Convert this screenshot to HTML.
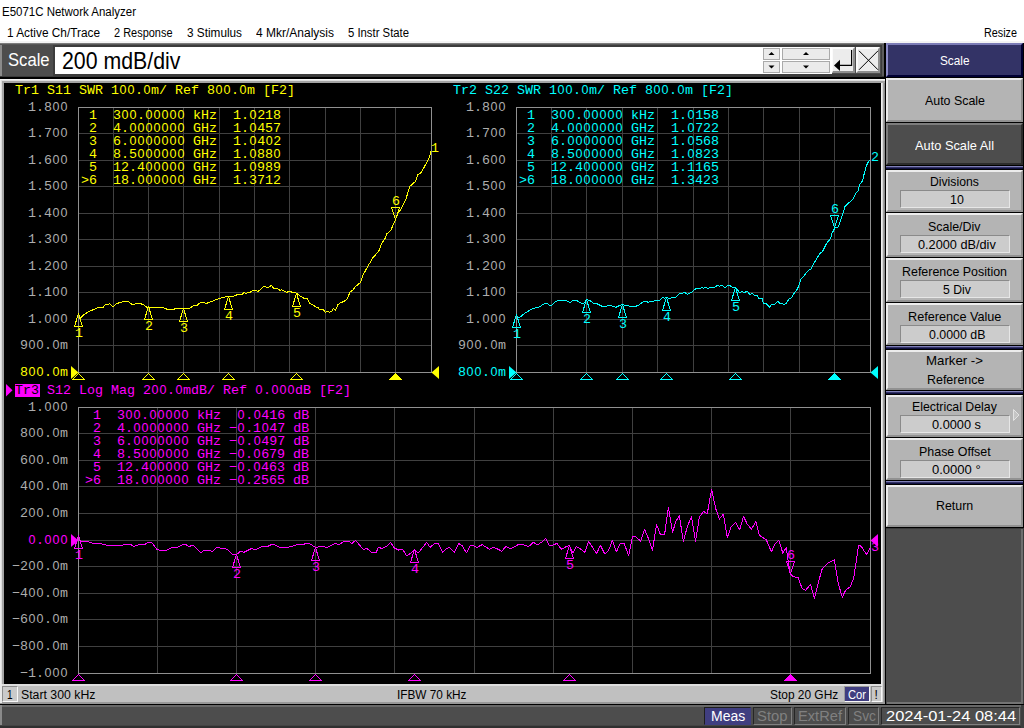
<!DOCTYPE html>
<html><head><meta charset="utf-8"><title>E5071C Network Analyzer</title>
<style>
html,body{margin:0;padding:0;}
body{width:1024px;height:728px;position:relative;overflow:hidden;background:#fff;font-family:"Liberation Sans",sans-serif;}
.a{position:absolute;}
.t{position:absolute;white-space:pre;line-height:1;}
.m{font-family:"Liberation Mono",monospace;font-size:13.33px;white-space:pre;position:absolute;line-height:13px;letter-spacing:0;}
.m i{font-family:"Liberation Sans",sans-serif;font-style:normal;font-size:12.5px;letter-spacing:1.05px;line-height:0;position:relative;left:0.5px;}
.btn{position:absolute;left:886px;width:137px;background:#b4b4b4;box-sizing:border-box;border-style:solid;border-width:2px;border-color:#ececec #919191 #919191 #ececec;}
.fld{position:absolute;width:110px;height:18px;background:#cccccc;box-sizing:border-box;border-style:solid;border-width:1px;border-color:#8a8a8a #e6e6e6 #e6e6e6 #8a8a8a;}
.sep{position:absolute;left:886px;width:137px;height:3px;background:#333366;border-top:1px solid #8080b8;border-bottom:1px solid #101040;box-sizing:border-box;}
.sb{position:absolute;top:707px;height:18px;box-sizing:border-box;}
</style></head><body>

<div class="t" style="left:2px;top:5.84px;font-size:12px;color:#000;transform-origin:0 0;transform:scaleX(0.9566);">E5071C Network Analyzer</div>
<div class="t" style="left:7px;top:26.84px;font-size:12px;color:#000;transform-origin:0 0;transform:scaleX(0.9866);">1 Active Ch/Trace</div>
<div class="t" style="left:114px;top:26.84px;font-size:12px;color:#000;transform-origin:0 0;transform:scaleX(0.9134);">2 Response</div>
<div class="t" style="left:187px;top:26.84px;font-size:12px;color:#000;transform-origin:0 0;transform:scaleX(0.9817);">3 Stimulus</div>
<div class="t" style="left:256px;top:26.84px;font-size:12px;color:#000;transform-origin:0 0;transform:scaleX(0.9997);">4 Mkr/Analysis</div>
<div class="t" style="left:348px;top:26.84px;font-size:12px;color:#000;transform-origin:0 0;transform:scaleX(0.9428);">5 Instr State</div>
<div class="t" style="left:984px;top:26.84px;font-size:12px;color:#000;transform-origin:0 0;transform:scaleX(0.8997);">Resize</div>
<div class="a" style="left:0;top:41px;width:1024px;height:2px;background:#f4f4f4;"></div>
<div class="a" style="left:0;top:43px;width:1024px;height:685px;background:#4d4d4d;"></div>
<div class="a" style="left:0;top:43px;width:886px;height:1px;background:#7c7c7c;"></div>
<div class="a" style="left:0;top:44px;width:886px;height:1px;background:#585858;"></div>
<div class="a" style="left:0;top:45px;width:2px;height:32px;background:#8a8a8a;"></div>
<div class="a" style="left:0;top:76px;width:886px;height:1px;background:#3a3a3a;"></div>
<div class="a" style="left:0;top:77px;width:886px;height:2px;background:#000;"></div>
<div class="a" style="left:884px;top:43px;width:2px;height:36px;background:#000;"></div>
<div class="a" style="left:881px;top:45px;width:3px;height:31px;background:#5c5c5c;"></div>
<div class="a" style="left:53px;top:45px;width:829px;height:31px;background:#3c3c3c;"></div>
<div class="a" style="left:55px;top:47px;width:825px;height:27px;background:#fff;"></div>
<div class="t" style="left:7.6px;top:52.19px;font-size:17.5px;color:#fff;transform-origin:0 0;transform:scaleX(0.9503);">Scale</div>
<div class="t" style="left:61.8px;top:49.59px;font-size:23.4px;color:#000;transform-origin:0 0;transform:scaleX(0.9110);">200 mdB/div</div>
<div class="a" style="left:763px;top:48px;width:17px;height:12px;background:#ebebeb;box-sizing:border-box;border:1px solid #aaaaaa;"></div>
<div class="a" style="left:763px;top:61px;width:17px;height:12px;background:#ebebeb;box-sizing:border-box;border:1px solid #aaaaaa;"></div>
<div class="a" style="left:782px;top:48px;width:48px;height:12px;background:#ebebeb;box-sizing:border-box;border:1px solid #aaaaaa;"></div>
<div class="a" style="left:782px;top:61px;width:48px;height:12px;background:#ebebeb;box-sizing:border-box;border:1px solid #aaaaaa;"></div>
<div class="a" style="left:832px;top:47px;width:49px;height:27px;background:#4d4d4d;"></div>
<div class="a" style="left:832px;top:47px;width:23px;height:26px;background:#ececec;box-sizing:border-box;border-style:solid;border-width:2px 2px 2px 1px;border-color:#fbfbfb #8e8e8e #8e8e8e #fbfbfb;"></div>
<div class="a" style="left:856px;top:47px;width:24px;height:26px;background:#ececec;box-sizing:border-box;border-style:solid;border-width:2px;border-color:#fbfbfb #8e8e8e #8e8e8e #fbfbfb;"></div>
<svg class="a" style="left:0;top:0;" width="1024" height="100" viewBox="0 0 1024 100">
<polygon points="768.5,55 774.5,55 771.5,52" fill="#000"/>
<polygon points="768.5,65.5 774.5,65.5 771.5,68.5" fill="#000"/>
<polygon points="803,55 809,55 806,52" fill="#000"/>
<polygon points="803,65.5 809,65.5 806,68.5" fill="#000"/>
<path d="M851.6 50 V65.4 H839" fill="none" stroke="#000" stroke-width="1.2"/>
<polygon points="834,65.4 840,59.8 840,71" fill="#000"/>
<path d="M859 50.8 L878 69.8 M878 50.8 L859 69.8" fill="none" stroke="#000" stroke-width="1"/>
</svg>
<div class="a" style="left:0;top:79px;width:885px;height:623px;background:#a4a4a4;"></div>
<div class="a" style="left:0;top:79px;width:885px;height:1px;background:#f4f4f4;"></div>
<div class="a" style="left:0;top:80px;width:885px;height:1px;background:#dedede;"></div>
<div class="a" style="left:0;top:80px;width:1px;height:622px;background:#ececec;"></div>
<div class="a" style="left:1px;top:81px;width:1px;height:621px;background:#dcdcdc;"></div>
<div class="a" style="left:4px;top:83px;width:877px;height:601px;background:#000;"></div>
<div class="a" style="left:881px;top:83px;width:1px;height:619px;background:#f0f0f0;"></div>
<div class="a" style="left:882px;top:83px;width:1px;height:619px;background:#d8d8d8;"></div>
<div class="a" style="left:883px;top:83px;width:1px;height:619px;background:#a0a0a0;"></div>
<div class="a" style="left:884px;top:83px;width:1px;height:619px;background:#8c8c8c;"></div>
<div class="a" style="left:0;top:684px;width:881px;height:18px;background:#c0c0c0;"></div>
<div class="a" style="left:0;top:684px;width:881px;height:2px;background:#dedede;"></div>
<div class="a" style="left:0;top:702px;width:885px;height:2px;background:#989898;"></div>
<div class="a" style="left:887px;top:702px;width:136px;height:2px;background:#747474;"></div>
<div class="a" style="left:0;top:704px;width:1024px;height:1px;background:#000;"></div>
<div class="a" style="left:2px;top:686px;width:16px;height:16px;background:#cacaca;box-sizing:border-box;border:1px solid #f8f8f8;border-top-color:#8c8c8c;border-left-color:#8c8c8c;"></div>
<div class="a" style="left:0;top:684px;width:2px;height:19px;background:#e8e8e8;"></div>
<div class="t" style="left:6.6px;top:689.14px;font-size:12px;color:#000;transform-origin:0 0;transform:scaleX(0.8391);">1</div>
<div class="t" style="left:21.4px;top:689.14px;font-size:12px;color:#000;transform-origin:0 0;transform:scaleX(1.0234);">Start 300 kHz</div>
<div class="t" style="left:397.3px;top:689.14px;font-size:12px;color:#000;transform-origin:0 0;transform:scaleX(0.9834);">IFBW 70 kHz</div>
<div class="t" style="left:769.6px;top:689.14px;font-size:12px;color:#000;transform-origin:0 0;transform:scaleX(0.9927);">Stop 20 GHz</div>
<div class="a" style="left:844px;top:686px;width:26px;height:16px;background:#403e80;box-sizing:border-box;border:1px solid #f8f8f8;border-top-color:#9a9a9a;border-left-color:#9a9a9a;"></div>
<div class="t" style="left:848.3px;top:689.14px;font-size:12px;color:#fff;transform-origin:0 0;transform:scaleX(0.9309);">Cor</div>
<div class="a" style="left:871px;top:686px;width:11px;height:16px;background:#c8c8c8;box-sizing:border-box;border:1px solid #f8f8f8;border-top-color:#8c8c8c;border-left-color:#8c8c8c;"></div>
<div class="t" style="left:874.6px;top:689.14px;font-size:12px;color:#000;transform-origin:0 0;transform:scaleX(1.0000);">!</div>
<div class="a" style="left:885px;top:43px;width:139px;height:485px;background:#000;"></div>
<div class="a" style="left:1021px;top:528px;width:2px;height:176px;background:#6e6e6e;"></div>
<div class="a" style="left:1023px;top:528px;width:1px;height:176px;background:#3a3a3a;"></div>
<div class="a" style="left:886px;top:528px;width:137px;height:1px;background:#3a3a3a;"></div>
<div class="a" style="left:885px;top:528px;width:1px;height:176px;background:#000;"></div>
<div class="a" style="left:886px;top:43px;width:137px;height:34px;background:#333366;box-sizing:border-box;border-top:2px solid #7c7cb6;border-left:2px solid #8c8cc8;border-bottom:2px solid #000033;border-right:2px solid #000033;"></div>
<div class="t" style="left:939.95px;top:54.3px;font-size:13px;color:#fff;transform-origin:0 0;transform:scaleX(0.9071);">Scale</div>
<div class="btn" style="top:78px;height:44px;"></div>
<div class="t" style="left:924.7px;top:94px;font-size:13px;color:#000;transform-origin:0 0;transform:scaleX(0.9543);">Auto Scale</div>
<div class="btn" style="top:123px;height:42px;background:#4d4d4d;border-color:#7c7c7c #2c2c2c #2c2c2c #7c7c7c;"></div>
<div class="t" style="left:915.2px;top:139px;font-size:13px;color:#fff;transform-origin:0 0;transform:scaleX(0.9848);">Auto Scale All</div>
<div class="sep" style="top:166px;"></div>
<div class="btn" style="top:170px;height:42px;"></div>
<div class="t" style="left:930.3px;top:174.5px;font-size:13px;color:#000;transform-origin:0 0;transform:scaleX(0.9382);">Divisions</div>
<div class="fld" style="left:900px;top:190px;"></div>
<div class="t" style="left:949.8px;top:192.6px;font-size:13px;color:#000;transform-origin:0 0;transform:scaleX(0.9543);">10</div>
<div class="btn" style="top:213px;height:44px;"></div>
<div class="t" style="left:928.45px;top:219.5px;font-size:13px;color:#000;transform-origin:0 0;transform:scaleX(0.9561);">Scale/Div</div>
<div class="fld" style="left:900px;top:235px;"></div>
<div class="t" style="left:917.8px;top:237.6px;font-size:13px;color:#000;transform-origin:0 0;transform:scaleX(0.9785);">0.2000 dB/div</div>
<div class="btn" style="top:258px;height:44px;"></div>
<div class="t" style="left:902.2px;top:264.5px;font-size:13px;color:#000;transform-origin:0 0;transform:scaleX(0.9559);">Reference Position</div>
<div class="fld" style="left:900px;top:280px;"></div>
<div class="t" style="left:942.8px;top:282.6px;font-size:13px;color:#000;transform-origin:0 0;transform:scaleX(0.9386);">5 Div</div>
<div class="btn" style="top:303px;height:42px;"></div>
<div class="t" style="left:908px;top:309.5px;font-size:13px;color:#000;transform-origin:0 0;transform:scaleX(0.9742);">Reference Value</div>
<div class="fld" style="left:900px;top:325px;"></div>
<div class="t" style="left:928.5px;top:327.6px;font-size:13px;color:#000;transform-origin:0 0;transform:scaleX(0.9515);">0.0000 dB</div>
<div class="sep" style="top:346px;"></div>
<div class="btn" style="top:350px;height:40px;"></div>
<div class="t" style="left:926.2px;top:354.3px;font-size:13px;color:#000;transform-origin:0 0;transform:scaleX(1.0182);">Marker -&gt;</div>
<div class="t" style="left:926.5px;top:372.6px;font-size:13px;color:#000;transform-origin:0 0;transform:scaleX(0.9570);">Reference</div>
<div class="sep" style="top:391px;"></div>
<div class="btn" style="top:395px;height:42px;"></div>
<div class="t" style="left:912.3px;top:399.5px;font-size:13px;color:#000;transform-origin:0 0;transform:scaleX(0.9466);">Electrical Delay</div>
<div class="fld" style="left:900px;top:415px;"></div>
<div class="t" style="left:932.2px;top:417.6px;font-size:13px;color:#000;transform-origin:0 0;transform:scaleX(0.9825);">0.0000 s</div>
<svg class="a" style="left:1012px;top:408px;" width="10" height="14" viewBox="0 0 10 14"><path d="M1.5 1.5 L7 7 L1.5 12.5 Z" fill="#c4c4c4" stroke="#e2e2e2" stroke-width="1"/></svg>
<div class="btn" style="top:438px;height:42px;"></div>
<div class="t" style="left:918.85px;top:444.5px;font-size:13px;color:#000;transform-origin:0 0;transform:scaleX(0.9571);">Phase Offset</div>
<div class="fld" style="left:900px;top:460px;"></div>
<div class="t" style="left:932.35px;top:462.6px;font-size:13px;color:#000;transform-origin:0 0;transform:scaleX(1.0026);">0.0000 °</div>
<div class="sep" style="top:481px;"></div>
<div class="btn" style="top:485px;height:42px;"></div>
<div class="t" style="left:936.1px;top:499px;font-size:13px;color:#000;transform-origin:0 0;transform:scaleX(0.9533);">Return</div>
<div class="a" style="left:0;top:705px;width:1024px;height:23px;background:#4d4d4d;"></div>
<div class="a" style="left:0;top:705px;width:1021px;height:2px;background:#686868;"></div>
<div class="a" style="left:0;top:705px;width:2px;height:21px;background:#8a8a8a;"></div>
<div class="a" style="left:0;top:725px;width:1024px;height:1px;background:#444;"></div>
<div class="a" style="left:0;top:726px;width:1024px;height:2px;background:#303030;"></div>
<div class="a" style="left:1021px;top:705px;width:3px;height:23px;background:#3e3e3e;"></div>
<div class="sb" style="left:704px;width:47px;background:#403e80;border:1px solid #403e80;border-top-color:#1e1e1e;border-left-color:#1e1e1e;"></div>
<div class="t" style="left:710.5px;top:708.46px;font-size:15.4px;color:#fff;transform-origin:0 0;transform:scaleX(0.9081);">Meas</div>
<div class="sb" style="left:753px;width:39px;background:#4d4d4d;border:1px solid #808080;border-top-color:#262626;border-left-color:#262626;"></div>
<div class="t" style="left:757.3px;top:708.46px;font-size:15.4px;color:#808080;transform-origin:0 0;transform:scaleX(0.9627);">Stop</div>
<div class="sb" style="left:794px;width:52px;background:#4d4d4d;border:1px solid #808080;border-top-color:#262626;border-left-color:#262626;"></div>
<div class="t" style="left:798.4px;top:708.46px;font-size:15.4px;color:#808080;transform-origin:0 0;transform:scaleX(0.9521);">ExtRef</div>
<div class="sb" style="left:848px;width:31px;background:#4d4d4d;border:1px solid #808080;border-top-color:#262626;border-left-color:#262626;"></div>
<div class="t" style="left:852.8px;top:708.46px;font-size:15.4px;color:#808080;transform-origin:0 0;transform:scaleX(0.8959);">Svc</div>
<div class="sb" style="left:881px;width:139px;background:#4d4d4d;border:1px solid #808080;border-top-color:#262626;border-left-color:#262626;"></div>
<div class="t" style="left:885.7px;top:708.46px;font-size:15.4px;color:#fff;transform-origin:0 0;transform:scaleX(1.0708);">2024-01-24 08:44</div>
<div class="m" style="left:871px;top:541px;color:#ff00ff;">3</div>
<svg class="a" style="left:0;top:0;" width="1024" height="728" viewBox="0 0 1024 728">
<path d="M113.5 107 V372" stroke="#404040" stroke-width="1" shape-rendering="crispEdges"/>
<path d="M148.5 107 V372" stroke="#404040" stroke-width="1" shape-rendering="crispEdges"/>
<path d="M183.5 107 V372" stroke="#404040" stroke-width="1" shape-rendering="crispEdges"/>
<path d="M219.5 107 V372" stroke="#404040" stroke-width="1" shape-rendering="crispEdges"/>
<path d="M254.5 107 V372" stroke="#404040" stroke-width="1" shape-rendering="crispEdges"/>
<path d="M289.5 107 V372" stroke="#404040" stroke-width="1" shape-rendering="crispEdges"/>
<path d="M325.5 107 V372" stroke="#404040" stroke-width="1" shape-rendering="crispEdges"/>
<path d="M360.5 107 V372" stroke="#404040" stroke-width="1" shape-rendering="crispEdges"/>
<path d="M395.5 107 V372" stroke="#404040" stroke-width="1" shape-rendering="crispEdges"/>
<path d="M78 133.5 H431" stroke="#404040" stroke-width="1" shape-rendering="crispEdges"/>
<path d="M78 160.5 H431" stroke="#404040" stroke-width="1" shape-rendering="crispEdges"/>
<path d="M78 186.5 H431" stroke="#404040" stroke-width="1" shape-rendering="crispEdges"/>
<path d="M78 213.5 H431" stroke="#404040" stroke-width="1" shape-rendering="crispEdges"/>
<path d="M78 239.5 H431" stroke="#404040" stroke-width="1" shape-rendering="crispEdges"/>
<path d="M78 266.5 H431" stroke="#404040" stroke-width="1" shape-rendering="crispEdges"/>
<path d="M78 292.5 H431" stroke="#404040" stroke-width="1" shape-rendering="crispEdges"/>
<path d="M78 319.5 H431" stroke="#404040" stroke-width="1" shape-rendering="crispEdges"/>
<path d="M78 345.5 H431" stroke="#404040" stroke-width="1" shape-rendering="crispEdges"/>
<rect x="78.5" y="107.5" width="353" height="265" fill="none" stroke="#909090" stroke-width="1" shape-rendering="crispEdges"/>
<path d="M551.5 107 V372" stroke="#404040" stroke-width="1" shape-rendering="crispEdges"/>
<path d="M586.5 107 V372" stroke="#404040" stroke-width="1" shape-rendering="crispEdges"/>
<path d="M622.5 107 V372" stroke="#404040" stroke-width="1" shape-rendering="crispEdges"/>
<path d="M657.5 107 V372" stroke="#404040" stroke-width="1" shape-rendering="crispEdges"/>
<path d="M693.5 107 V372" stroke="#404040" stroke-width="1" shape-rendering="crispEdges"/>
<path d="M728.5 107 V372" stroke="#404040" stroke-width="1" shape-rendering="crispEdges"/>
<path d="M763.5 107 V372" stroke="#404040" stroke-width="1" shape-rendering="crispEdges"/>
<path d="M799.5 107 V372" stroke="#404040" stroke-width="1" shape-rendering="crispEdges"/>
<path d="M834.5 107 V372" stroke="#404040" stroke-width="1" shape-rendering="crispEdges"/>
<path d="M516 133.5 H870" stroke="#404040" stroke-width="1" shape-rendering="crispEdges"/>
<path d="M516 160.5 H870" stroke="#404040" stroke-width="1" shape-rendering="crispEdges"/>
<path d="M516 186.5 H870" stroke="#404040" stroke-width="1" shape-rendering="crispEdges"/>
<path d="M516 213.5 H870" stroke="#404040" stroke-width="1" shape-rendering="crispEdges"/>
<path d="M516 239.5 H870" stroke="#404040" stroke-width="1" shape-rendering="crispEdges"/>
<path d="M516 266.5 H870" stroke="#404040" stroke-width="1" shape-rendering="crispEdges"/>
<path d="M516 292.5 H870" stroke="#404040" stroke-width="1" shape-rendering="crispEdges"/>
<path d="M516 319.5 H870" stroke="#404040" stroke-width="1" shape-rendering="crispEdges"/>
<path d="M516 345.5 H870" stroke="#404040" stroke-width="1" shape-rendering="crispEdges"/>
<rect x="516.5" y="107.5" width="354" height="265" fill="none" stroke="#909090" stroke-width="1" shape-rendering="crispEdges"/>
<path d="M157.5 407 V673" stroke="#404040" stroke-width="1" shape-rendering="crispEdges"/>
<path d="M236.5 407 V673" stroke="#404040" stroke-width="1" shape-rendering="crispEdges"/>
<path d="M315.5 407 V673" stroke="#404040" stroke-width="1" shape-rendering="crispEdges"/>
<path d="M394.5 407 V673" stroke="#404040" stroke-width="1" shape-rendering="crispEdges"/>
<path d="M474.5 407 V673" stroke="#404040" stroke-width="1" shape-rendering="crispEdges"/>
<path d="M553.5 407 V673" stroke="#404040" stroke-width="1" shape-rendering="crispEdges"/>
<path d="M632.5 407 V673" stroke="#404040" stroke-width="1" shape-rendering="crispEdges"/>
<path d="M711.5 407 V673" stroke="#404040" stroke-width="1" shape-rendering="crispEdges"/>
<path d="M790.5 407 V673" stroke="#404040" stroke-width="1" shape-rendering="crispEdges"/>
<path d="M78 433.5 H870" stroke="#404040" stroke-width="1" shape-rendering="crispEdges"/>
<path d="M78 460.5 H870" stroke="#404040" stroke-width="1" shape-rendering="crispEdges"/>
<path d="M78 486.5 H870" stroke="#404040" stroke-width="1" shape-rendering="crispEdges"/>
<path d="M78 513.5 H870" stroke="#404040" stroke-width="1" shape-rendering="crispEdges"/>
<path d="M78 540.5 H870" stroke="#404040" stroke-width="1" shape-rendering="crispEdges"/>
<path d="M78 566.5 H870" stroke="#404040" stroke-width="1" shape-rendering="crispEdges"/>
<path d="M78 593.5 H870" stroke="#404040" stroke-width="1" shape-rendering="crispEdges"/>
<path d="M78 619.5 H870" stroke="#404040" stroke-width="1" shape-rendering="crispEdges"/>
<path d="M78 646.5 H870" stroke="#404040" stroke-width="1" shape-rendering="crispEdges"/>
<rect x="78.5" y="407.5" width="792" height="266" fill="none" stroke="#909090" stroke-width="1" shape-rendering="crispEdges"/>
<polyline points="78.5,313.5 80,318.3 81.5,317 83.9,314.8 87.6,312.4 93.2,309.6 98.1,307.7 102.75,307.7 105.5,304.4 108.6,304.4 109.6,303.3 111.4,305.6 113.3,306.5 116.25,303.75 120,302.5 123.75,301.5 128.1,301.5 131.9,304.4 134.4,304.4 136.25,303.4 140,303.4 143.75,305 147.2,307.5 156.25,307.5 163.5,307.5 165,308.5 168.75,309.75 173.1,309.75 175,308.75 183.1,308.75 185,309 189.4,308.5 193.1,306 197.5,305 200.6,302.25 203.75,302.5 206.25,303.5 210.6,301.9 215,300 219.4,298.5 223.75,297.25 228.4,296.25 232.5,296.5 237.5,294.6 241.9,294.4 244,292.5 245.6,293.5 250,292.25 253.1,290.25 255.6,290.6 258.1,291.25 261.25,289 263.75,286.5 266.9,287.25 269.4,286.9 271.25,285.25 273.5,288.1 277.5,288.5 280,290.25 281.9,289.75 286.25,292.25 290,291.5 293.75,292.75 296.25,293.1 300,296 304.4,298.5 306.9,298.1 310,303.75 312.5,304.4 315.6,306.9 318.1,307.5 319.75,310 323.1,309.4 325.6,312.5 327.5,311.25 330,312.25 331.9,311 333.5,308.5 335.4,310.25 338.1,304.4 340,303.1 343.75,301.5 347.5,298.75 350,291.9 353.1,290 355,286.9 358.1,284.4 360.6,282.5 363.1,275 367.5,266.9 373.1,257.5 378.75,251.25 381.9,243.1 385.6,237.5 386.9,233.75 390.6,230.6 395.6,219.4 398.1,212.5 400.6,210 405.6,200 410,186.25 415.6,181.25 417.5,175 421.25,172.5 425,165.6 429.4,157.5 431,151.25" fill="none" stroke="#ffff00" stroke-width="1" stroke-linejoin="round" shape-rendering="crispEdges"/>
<polyline points="516.75,314.4 517.25,317.5 519.5,317.5 525.1,313.1 532.6,308.5 539.5,306.9 543.9,304 547,303.5 550.1,305.6 552,305 555.75,301.25 560.1,300.25 565.75,300.25 570.1,302.75 572.6,300.4 576.4,300.4 582,303.5 584.5,302.75 586.6,299.6 589.5,300.25 593.25,303.1 596.4,303.5 602.6,306.5 605.75,306.5 608.9,305.4 611.4,305.6 615.75,307.5 619.5,305.4 622.6,304.4 625.1,305.6 630.75,306.25 634.5,306.5 638.25,305.6 642,302.5 645.1,301.25 648.25,302.25 652,301.25 656.4,300.6 659.75,300 662.6,297.5 664.5,298.1 666.4,297.5 669.5,298.5 672.6,297.5 675.75,297.25 679.5,293.5 682.6,293.1 684.5,292.25 687.6,294.4 692,291.9 696.4,288.1 700.75,288.1 702,287.25 703.5,288.5 705.1,287.25 708.25,288.5 710.1,287.5 714.5,287.25 717.6,285.4 719.5,286.25 721.4,285.25 723.25,286.25 725.1,287.75 727.6,285.6 729.5,285.4 732.6,287.25 735.5,287.25 737,289.4 739.5,292.5 742,291.5 744.5,292.5 747.3,291.25 749.5,294.2 752.6,293.75 754.5,295.4 757,295.6 758.9,298.5 762,298.5 763.5,303.1 766.4,303.75 769.5,307.25 771.4,304.6 774.5,304.4 777.6,301.25 779.75,303.4 782,303.5 783.5,304.6 786.4,303.4 788.9,299 792,297.25 793.9,293.5 796.4,290.6 798.9,285.6 800.75,279.4 802.6,277.5 808.25,270.6 811,269 813.25,264.4 816.4,259.4 819.5,254 822.6,251.25 826.4,243.75 830.75,238.1 832,233.1 833.25,231.25 834.5,228.3 838.25,226.9 842,216.25 845.1,206.25 853.25,198.75 856.4,192.5 858.25,190.6 859.5,185 862.6,180.6 863.9,175 866.4,165.6 869.5,159.75" fill="none" stroke="#00ffff" stroke-width="1" stroke-linejoin="round" shape-rendering="crispEdges"/>
<polyline points="78.5,535.5 80,540 81,541.5 88,541.5 91.9,543 99.75,543.5 107.6,545.4 122.4,545.4 124,544.3 130.3,544.3 133.9,546.6 138.9,544.6 145.1,544.3 149.1,542 152.2,543 156.9,549.3 160.8,550.4 166.3,550.4 171.8,547.75 177.2,547.4 182.7,544.6 185.9,544.6 189,546.6 192.1,545.4 194.5,546.2 200.7,552.75 203.9,550.4 210.1,550.4 212.5,551.7 217.2,547 220.3,548.2 225,548.8 228.1,549.8 232,554 236.4,554.5 240.7,551.2 243.8,552.4 251.6,548.5 255.5,549.8 261.8,546.7 268.1,546.2 272,544.3 275.1,544.9 279.8,547.3 288.4,547.3 293.9,545.7 297.8,544.6 303.3,544.6 306.4,543 309.5,543.5 315.5,547.4 323.6,546.2 326.8,547.75 334.6,543.5 339.3,544.6 344,541.2 348.7,541.2 351.8,543.5 355.7,540.4 363.5,549.8 366.7,548.2 372.2,552.75 376.1,552.4 378.4,547.4 382.3,548.5 387,546.2 390.6,542.3 394.1,547.75 398.8,550.1 402.7,549.3 406.6,556 411.3,552.9 414.4,549.8 418.4,552.9 426.7,542.3 430.1,547.4 434.5,543.5 438.2,543.5 442.6,552.4 446.5,548.5 449.7,547.4 454.4,552.4 458.75,543.5 461.9,545.4 466.4,552.75 470.3,545.7 473.2,545.4 477.1,547.4 482.1,544.6 489.6,549.3 493.5,547.4 496.6,548.5 501.8,551.3 505.7,546.5 509.9,548.5 513.1,547.75 517.8,544.9 523.25,544.6 528.7,546.5 533.4,542.3 537.3,545 542,541.8 545.6,538.4 549.1,545.4 553,545 556.9,543.4 561.6,549.4 567.1,546.1 569.4,545.75 573,552.8 576.5,546.5 580.4,548.9 584.8,552.3 588.7,541.5 596.5,553.6 600.4,545.4 604.7,554 608.6,550.4 612.5,540.3 616.4,551.7 620.3,543.4 624.2,543.4 628.6,555.9 632.5,536.4 636,537.1 640.7,541.1 644.6,529.6 648.5,538.7 652.4,550.4 656.6,524.6 660.2,534 664.6,534.5 668.4,507.4 672.5,532.4 675.9,521.5 679.3,515.7 683.4,541.5 687.2,527 691.5,516.5 695.5,541.5 699.4,516.8 703.8,511.3 707.2,514.1 711.6,489.4 715.8,509 719.4,519.1 723.3,514.1 727.3,537.6 731,527 735.4,522.3 739.8,529.8 743.5,516.3 747.1,523.8 751.5,529.3 755.75,521.5 759.4,535.3 766.4,540 771.4,551.7 775.3,543.4 778.9,540.3 782.8,553.1 786.2,547.5 790.1,573.4 793.5,576.8 798.1,577.4 802.2,588.7 805.75,590.3 810.4,584.2 814.4,598.3 821.8,569.6 827.4,563.5 834.3,559.7 838.3,584 842.4,597.1 845.7,590 850,587.1 853.6,578.6 855.7,565 858.6,545 861.4,546.4 866.4,554.6 870.3,547.9" fill="none" stroke="#ff00ff" stroke-width="1" stroke-linejoin="round" shape-rendering="crispEdges"/>
<path d="M78.5 313.5 L74.5 326.5 H82.5 Z" fill="none" stroke="#ffff00" stroke-width="1" stroke-linejoin="bevel" shape-rendering="crispEdges"/>
<path d="M78.5 373.5 L72.5 379.5 H84.5 Z" fill="none" stroke="#ffff00" stroke-width="1" stroke-linejoin="bevel" shape-rendering="crispEdges"/>
<path d="M148.5 306.5 L144.5 319.5 H152.5 Z" fill="none" stroke="#ffff00" stroke-width="1" stroke-linejoin="bevel" shape-rendering="crispEdges"/>
<path d="M148.5 373.5 L142.5 379.5 H154.5 Z" fill="none" stroke="#ffff00" stroke-width="1" stroke-linejoin="bevel" shape-rendering="crispEdges"/>
<path d="M183.5 308.5 L179.5 321.5 H187.5 Z" fill="none" stroke="#ffff00" stroke-width="1" stroke-linejoin="bevel" shape-rendering="crispEdges"/>
<path d="M183.5 373.5 L177.5 379.5 H189.5 Z" fill="none" stroke="#ffff00" stroke-width="1" stroke-linejoin="bevel" shape-rendering="crispEdges"/>
<path d="M228.5 296.5 L224.5 309.5 H232.5 Z" fill="none" stroke="#ffff00" stroke-width="1" stroke-linejoin="bevel" shape-rendering="crispEdges"/>
<path d="M228.5 373.5 L222.5 379.5 H234.5 Z" fill="none" stroke="#ffff00" stroke-width="1" stroke-linejoin="bevel" shape-rendering="crispEdges"/>
<path d="M296.5 293.5 L292.5 306.5 H300.5 Z" fill="none" stroke="#ffff00" stroke-width="1" stroke-linejoin="bevel" shape-rendering="crispEdges"/>
<path d="M296.5 373.5 L290.5 379.5 H302.5 Z" fill="none" stroke="#ffff00" stroke-width="1" stroke-linejoin="bevel" shape-rendering="crispEdges"/>
<path d="M395.5 219.5 L391.5 207.5 H399.5 Z" fill="none" stroke="#ffff00" stroke-width="1" stroke-linejoin="bevel" shape-rendering="crispEdges"/>
<path d="M395.5 373.5 L389.5 379.5 H401.5 Z" fill="#ffff00" stroke="#ffff00" stroke-width="1" stroke-linejoin="bevel" shape-rendering="crispEdges"/>
<path d="M516.5 314.5 L512.5 327.5 H520.5 Z" fill="none" stroke="#00ffff" stroke-width="1" stroke-linejoin="bevel" shape-rendering="crispEdges"/>
<path d="M516.5 373.5 L510.5 379.5 H522.5 Z" fill="none" stroke="#00ffff" stroke-width="1" stroke-linejoin="bevel" shape-rendering="crispEdges"/>
<path d="M586.5 299.5 L582.5 312.5 H590.5 Z" fill="none" stroke="#00ffff" stroke-width="1" stroke-linejoin="bevel" shape-rendering="crispEdges"/>
<path d="M586.5 373.5 L580.5 379.5 H592.5 Z" fill="none" stroke="#00ffff" stroke-width="1" stroke-linejoin="bevel" shape-rendering="crispEdges"/>
<path d="M622.5 304.5 L618.5 317.5 H626.5 Z" fill="none" stroke="#00ffff" stroke-width="1" stroke-linejoin="bevel" shape-rendering="crispEdges"/>
<path d="M622.5 373.5 L616.5 379.5 H628.5 Z" fill="none" stroke="#00ffff" stroke-width="1" stroke-linejoin="bevel" shape-rendering="crispEdges"/>
<path d="M666.5 297.5 L662.5 310.5 H670.5 Z" fill="none" stroke="#00ffff" stroke-width="1" stroke-linejoin="bevel" shape-rendering="crispEdges"/>
<path d="M666.5 373.5 L660.5 379.5 H672.5 Z" fill="none" stroke="#00ffff" stroke-width="1" stroke-linejoin="bevel" shape-rendering="crispEdges"/>
<path d="M735.5 287.5 L731.5 300.5 H739.5 Z" fill="none" stroke="#00ffff" stroke-width="1" stroke-linejoin="bevel" shape-rendering="crispEdges"/>
<path d="M735.5 373.5 L729.5 379.5 H741.5 Z" fill="none" stroke="#00ffff" stroke-width="1" stroke-linejoin="bevel" shape-rendering="crispEdges"/>
<path d="M834.5 227.5 L830.5 215.5 H838.5 Z" fill="none" stroke="#00ffff" stroke-width="1" stroke-linejoin="bevel" shape-rendering="crispEdges"/>
<path d="M834.5 373.5 L828.5 379.5 H840.5 Z" fill="#00ffff" stroke="#00ffff" stroke-width="1" stroke-linejoin="bevel" shape-rendering="crispEdges"/>
<path d="M78.5 535.5 L74.5 548.5 H82.5 Z" fill="none" stroke="#ff00ff" stroke-width="1" stroke-linejoin="bevel" shape-rendering="crispEdges"/>
<path d="M78.5 674.5 L72.5 680.5 H84.5 Z" fill="none" stroke="#ff00ff" stroke-width="1" stroke-linejoin="bevel" shape-rendering="crispEdges"/>
<path d="M236.5 554.5 L232.5 567.5 H240.5 Z" fill="none" stroke="#ff00ff" stroke-width="1" stroke-linejoin="bevel" shape-rendering="crispEdges"/>
<path d="M236.5 674.5 L230.5 680.5 H242.5 Z" fill="none" stroke="#ff00ff" stroke-width="1" stroke-linejoin="bevel" shape-rendering="crispEdges"/>
<path d="M315.5 547.5 L311.5 560.5 H319.5 Z" fill="none" stroke="#ff00ff" stroke-width="1" stroke-linejoin="bevel" shape-rendering="crispEdges"/>
<path d="M315.5 674.5 L309.5 680.5 H321.5 Z" fill="none" stroke="#ff00ff" stroke-width="1" stroke-linejoin="bevel" shape-rendering="crispEdges"/>
<path d="M414.5 549.5 L410.5 562.5 H418.5 Z" fill="none" stroke="#ff00ff" stroke-width="1" stroke-linejoin="bevel" shape-rendering="crispEdges"/>
<path d="M414.5 674.5 L408.5 680.5 H420.5 Z" fill="none" stroke="#ff00ff" stroke-width="1" stroke-linejoin="bevel" shape-rendering="crispEdges"/>
<path d="M569.5 545.5 L565.5 558.5 H573.5 Z" fill="none" stroke="#ff00ff" stroke-width="1" stroke-linejoin="bevel" shape-rendering="crispEdges"/>
<path d="M569.5 674.5 L563.5 680.5 H575.5 Z" fill="none" stroke="#ff00ff" stroke-width="1" stroke-linejoin="bevel" shape-rendering="crispEdges"/>
<path d="M790.5 573.5 L786.5 561.5 H794.5 Z" fill="none" stroke="#ff00ff" stroke-width="1" stroke-linejoin="bevel" shape-rendering="crispEdges"/>
<path d="M790.5 674.5 L784.5 680.5 H796.5 Z" fill="#ff00ff" stroke="#ff00ff" stroke-width="1" stroke-linejoin="bevel" shape-rendering="crispEdges"/>
<polygon points="71,366 78.5,372.5 71,379" fill="#ffff00"/>
<polygon points="439,366 431.5,372.5 439,379" fill="#ffff00"/>
<polygon points="509,366 516.5,372.5 509,379" fill="#00ffff"/>
<polygon points="878,366 870.5,372.5 878,379" fill="#00ffff"/>
<polygon points="71,534 78.5,540.5 71,547" fill="#ff00ff"/>
<polygon points="878,534 870.5,540.5 878,547" fill="#ff00ff"/>
<polygon points="6,384 12.5,390.25 6,396.5" fill="#ff00ff"/>
</svg>
<div class="m" style="left:15px;top:84px;color:#ffff00;">Tr1 S11 SWR 1<i>0</i><i>0</i>.<i>0</i>m/ Ref 8<i>0</i><i>0</i>.<i>0</i>m [F2]</div>
<div class="m" style="left:453px;top:84px;color:#00ffff;">Tr2 S22 SWR 1<i>0</i><i>0</i>.<i>0</i>m/ Ref 8<i>0</i><i>0</i>.<i>0</i>m [F2]</div>
<div class="a" style="left:15px;top:384px;width:25px;height:13px;background:#ff00ff;"></div>
<div class="m" style="left:15px;top:384px;color:#000;">Tr3</div>
<div class="m" style="left:47px;top:384px;color:#ff00ff;">S12 Log Mag 2<i>0</i><i>0</i>.<i>0</i>mdB/ Ref <i>0</i>.<i>0</i><i>0</i><i>0</i>dB [F2]</div>
<div class="m" style="left:-12px;width:80px;text-align:right;top:101px;color:#adadad;">1.8<i>0</i><i>0</i></div>
<div class="m" style="left:-12px;width:80px;text-align:right;top:127px;color:#adadad;">1.7<i>0</i><i>0</i></div>
<div class="m" style="left:-12px;width:80px;text-align:right;top:154px;color:#adadad;">1.6<i>0</i><i>0</i></div>
<div class="m" style="left:-12px;width:80px;text-align:right;top:180px;color:#adadad;">1.5<i>0</i><i>0</i></div>
<div class="m" style="left:-12px;width:80px;text-align:right;top:207px;color:#adadad;">1.4<i>0</i><i>0</i></div>
<div class="m" style="left:-12px;width:80px;text-align:right;top:233px;color:#adadad;">1.3<i>0</i><i>0</i></div>
<div class="m" style="left:-12px;width:80px;text-align:right;top:260px;color:#adadad;">1.2<i>0</i><i>0</i></div>
<div class="m" style="left:-12px;width:80px;text-align:right;top:286px;color:#adadad;">1.1<i>0</i><i>0</i></div>
<div class="m" style="left:-12px;width:80px;text-align:right;top:313px;color:#adadad;">1.<i>0</i><i>0</i><i>0</i></div>
<div class="m" style="left:-12px;width:80px;text-align:right;top:339px;color:#adadad;">9<i>0</i><i>0</i>.<i>0</i>m</div>
<div class="m" style="left:-12px;width:80px;text-align:right;top:366px;color:#ffff00;">8<i>0</i><i>0</i>.<i>0</i>m</div>
<div class="m" style="left:426px;width:80px;text-align:right;top:101px;color:#adadad;">1.8<i>0</i><i>0</i></div>
<div class="m" style="left:426px;width:80px;text-align:right;top:127px;color:#adadad;">1.7<i>0</i><i>0</i></div>
<div class="m" style="left:426px;width:80px;text-align:right;top:154px;color:#adadad;">1.6<i>0</i><i>0</i></div>
<div class="m" style="left:426px;width:80px;text-align:right;top:180px;color:#adadad;">1.5<i>0</i><i>0</i></div>
<div class="m" style="left:426px;width:80px;text-align:right;top:207px;color:#adadad;">1.4<i>0</i><i>0</i></div>
<div class="m" style="left:426px;width:80px;text-align:right;top:233px;color:#adadad;">1.3<i>0</i><i>0</i></div>
<div class="m" style="left:426px;width:80px;text-align:right;top:260px;color:#adadad;">1.2<i>0</i><i>0</i></div>
<div class="m" style="left:426px;width:80px;text-align:right;top:286px;color:#adadad;">1.1<i>0</i><i>0</i></div>
<div class="m" style="left:426px;width:80px;text-align:right;top:313px;color:#adadad;">1.<i>0</i><i>0</i><i>0</i></div>
<div class="m" style="left:426px;width:80px;text-align:right;top:339px;color:#adadad;">9<i>0</i><i>0</i>.<i>0</i>m</div>
<div class="m" style="left:426px;width:80px;text-align:right;top:366px;color:#00ffff;">8<i>0</i><i>0</i>.<i>0</i>m</div>
<div class="m" style="left:-12px;width:80px;text-align:right;top:401px;color:#adadad;">1.<i>0</i><i>0</i><i>0</i></div>
<div class="m" style="left:-12px;width:80px;text-align:right;top:427px;color:#adadad;">8<i>0</i><i>0</i>.<i>0</i>m</div>
<div class="m" style="left:-12px;width:80px;text-align:right;top:454px;color:#adadad;">6<i>0</i><i>0</i>.<i>0</i>m</div>
<div class="m" style="left:-12px;width:80px;text-align:right;top:480px;color:#adadad;">4<i>0</i><i>0</i>.<i>0</i>m</div>
<div class="m" style="left:-12px;width:80px;text-align:right;top:507px;color:#adadad;">2<i>0</i><i>0</i>.<i>0</i>m</div>
<div class="m" style="left:-12px;width:80px;text-align:right;top:534px;color:#ff00ff;"><i>0</i>.<i>0</i><i>0</i><i>0</i></div>
<div class="m" style="left:-12px;width:80px;text-align:right;top:560px;color:#adadad;">−2<i>0</i><i>0</i>.<i>0</i>m</div>
<div class="m" style="left:-12px;width:80px;text-align:right;top:587px;color:#adadad;">−4<i>0</i><i>0</i>.<i>0</i>m</div>
<div class="m" style="left:-12px;width:80px;text-align:right;top:613px;color:#adadad;">−6<i>0</i><i>0</i>.<i>0</i>m</div>
<div class="m" style="left:-12px;width:80px;text-align:right;top:640px;color:#adadad;">−8<i>0</i><i>0</i>.<i>0</i>m</div>
<div class="m" style="left:-12px;width:80px;text-align:right;top:667px;color:#adadad;">−1.<i>0</i><i>0</i><i>0</i></div>
<div class="m" style="left:81px;top:109px;color:#ffff00;"> 1  3<i>0</i><i>0</i>.<i>0</i><i>0</i><i>0</i><i>0</i><i>0</i> kHz  1.<i>0</i>218
 2  4.<i>0</i><i>0</i><i>0</i><i>0</i><i>0</i><i>0</i><i>0</i> GHz  1.<i>0</i>457
 3  6.<i>0</i><i>0</i><i>0</i><i>0</i><i>0</i><i>0</i><i>0</i> GHz  1.<i>0</i>4<i>0</i>2
 4  8.5<i>0</i><i>0</i><i>0</i><i>0</i><i>0</i><i>0</i> GHz  1.<i>0</i>88<i>0</i>
 5  12.4<i>0</i><i>0</i><i>0</i><i>0</i><i>0</i> GHz  1.<i>0</i>989
&gt;6  18.<i>0</i><i>0</i><i>0</i><i>0</i><i>0</i><i>0</i> GHz  1.3712</div>
<div class="m" style="left:519px;top:109px;color:#00ffff;"> 1  3<i>0</i><i>0</i>.<i>0</i><i>0</i><i>0</i><i>0</i><i>0</i> kHz  1.<i>0</i>158
 2  4.<i>0</i><i>0</i><i>0</i><i>0</i><i>0</i><i>0</i><i>0</i> GHz  1.<i>0</i>722
 3  6.<i>0</i><i>0</i><i>0</i><i>0</i><i>0</i><i>0</i><i>0</i> GHz  1.<i>0</i>568
 4  8.5<i>0</i><i>0</i><i>0</i><i>0</i><i>0</i><i>0</i> GHz  1.<i>0</i>823
 5  12.4<i>0</i><i>0</i><i>0</i><i>0</i><i>0</i> GHz  1.1165
&gt;6  18.<i>0</i><i>0</i><i>0</i><i>0</i><i>0</i><i>0</i> GHz  1.3423</div>
<div class="m" style="left:85px;top:409px;color:#ff00ff;"> 1  3<i>0</i><i>0</i>.<i>0</i><i>0</i><i>0</i><i>0</i><i>0</i> kHz  <i>0</i>.<i>0</i>416 dB
 2  4.<i>0</i><i>0</i><i>0</i><i>0</i><i>0</i><i>0</i><i>0</i> GHz −<i>0</i>.1<i>0</i>47 dB
 3  6.<i>0</i><i>0</i><i>0</i><i>0</i><i>0</i><i>0</i><i>0</i> GHz −<i>0</i>.<i>0</i>497 dB
 4  8.5<i>0</i><i>0</i><i>0</i><i>0</i><i>0</i><i>0</i> GHz −<i>0</i>.<i>0</i>679 dB
 5  12.4<i>0</i><i>0</i><i>0</i><i>0</i><i>0</i> GHz −<i>0</i>.<i>0</i>463 dB
&gt;6  18.<i>0</i><i>0</i><i>0</i><i>0</i><i>0</i><i>0</i> GHz −<i>0</i>.2565 dB</div>
<div class="m" style="left:75px;top:327px;color:#ffff00;">1</div>
<div class="m" style="left:145px;top:320px;color:#ffff00;">2</div>
<div class="m" style="left:180px;top:322px;color:#ffff00;">3</div>
<div class="m" style="left:225px;top:310px;color:#ffff00;">4</div>
<div class="m" style="left:293px;top:307px;color:#ffff00;">5</div>
<div class="m" style="left:392px;top:195px;color:#ffff00;">6</div>
<div class="m" style="left:513px;top:328px;color:#00ffff;">1</div>
<div class="m" style="left:583px;top:313px;color:#00ffff;">2</div>
<div class="m" style="left:619px;top:318px;color:#00ffff;">3</div>
<div class="m" style="left:663px;top:311px;color:#00ffff;">4</div>
<div class="m" style="left:732px;top:301px;color:#00ffff;">5</div>
<div class="m" style="left:831px;top:203px;color:#00ffff;">6</div>
<div class="m" style="left:75px;top:549px;color:#ff00ff;">1</div>
<div class="m" style="left:233px;top:568px;color:#ff00ff;">2</div>
<div class="m" style="left:312px;top:561px;color:#ff00ff;">3</div>
<div class="m" style="left:411px;top:563px;color:#ff00ff;">4</div>
<div class="m" style="left:566px;top:559px;color:#ff00ff;">5</div>
<div class="m" style="left:787px;top:549px;color:#ff00ff;">6</div>
<div class="m" style="left:431px;top:142px;color:#ffff00;">1</div>
<div class="m" style="left:871px;top:151px;color:#00ffff;">2</div>
</body></html>
